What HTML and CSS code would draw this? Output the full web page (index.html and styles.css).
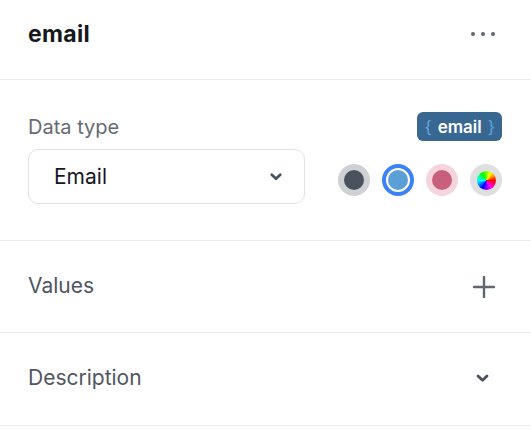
FILE: index.html
```html
<!DOCTYPE html>
<html>
<head>
<meta charset="utf-8">
<link rel="stylesheet" href="styles.css">
</head>
<body>
<div class="panel">
  <div class="header">
    <div class="title">email</div>
    <div class="more"><span></span><span></span><span></span></div>
  </div>
  <div class="section datatype">
    <div class="label-row">
      <div class="label">Data type</div>
      <div class="badge"><span class="brace">{</span><span>email</span><span class="brace">}</span></div>
    </div>
    <div class="control-row">
      <div class="select">
        <span class="select-text">Email</span>
        <svg class="chev" width="12" height="8" viewBox="0 0 12 8"><path d="M1.8 1.8 L6 5.8 L10.2 1.8" fill="none" stroke="#4b5360" stroke-width="2.8" stroke-linecap="round" stroke-linejoin="round"/></svg>
      </div>
      <div class="swatches">
        <div class="swatch s-gray"><i></i></div>
        <div class="swatch s-blue"><i></i></div>
        <div class="swatch s-pink"><i></i></div>
        <div class="swatch s-rainbow"><i></i></div>
      </div>
    </div>
  </div>
  <div class="section row">
    <div class="row-title">Values</div>
    <svg class="plus" width="22" height="22" viewBox="0 0 22 22"><path d="M11 1 V21 M1 11 H21" stroke="#5f6670" stroke-width="2.4" stroke-linecap="round"/></svg>
  </div>
  <div class="section row last">
    <div class="row-title">Description</div>
    <svg class="chev2" width="13" height="9" viewBox="0 0 13 9"><path d="M2 2 L6.5 6.3 L11 2" fill="none" stroke="#4b5360" stroke-width="2.8" stroke-linecap="round" stroke-linejoin="round"/></svg>
  </div>
</div>
</body>
</html>
```

FILE: styles.css
```css
html, body {
  margin: 0;
  padding: 0;
  background: #ffffff;
}
body {
  font-family: Inter, "Noto Sans", sans-serif;
}
.panel {
  width: 531px;
}
.header {
  height: 80px;
  box-sizing: border-box;
  padding: 20px 29px 0 28px;
  display: flex;
  justify-content: space-between;
  align-items: flex-start;
  border-bottom: 1px solid #efefef;
}
.title {
  font-size: 23px;
  font-weight: 700;
  line-height: 28px;
  color: #16181c;
  letter-spacing: 0.3px;
}
.more {
  display: flex;
  gap: 6px;
  height: 28px;
  align-items: center;
  padding-right: 7px;
}
.more span {
  width: 4px;
  height: 4px;
  border-radius: 50%;
  background: #5f6670;
}
.section {
  border-bottom: 1px solid #efefef;
  box-sizing: border-box;
}
.datatype {
  height: 161px;
  padding: 32px 29px 0 28px;
}
.label-row {
  display: flex;
  justify-content: space-between;
  align-items: center;
  height: 29px;
}
.label {
  font-size: 20px;
  color: #656b73;
}
.badge {
  background: #386792;
  color: #ffffff;
  border-radius: 6px;
  height: 29px;
  box-sizing: border-box;
  padding: 0 7px;
  display: flex;
  align-items: center;
  gap: 6px;
  font-size: 17px;
  font-weight: 600;
}
.badge .brace {
  color: #5fa6e0;
  font-weight: 400;
}
.control-row {
  margin-top: 8px;
  display: flex;
  align-items: flex-start;
  gap: 33px;
}
.select {
  width: 277px;
  height: 55px;
  box-sizing: border-box;
  border: 1px solid #e2e2e2;
  border-radius: 10px;
  display: flex;
  align-items: center;
  justify-content: space-between;
  padding: 0 22px 0 25px;
}
.select-text {
  font-size: 21px;
  color: #16181c;
}
.chev {
  margin-top: 1px;
}
.swatches {
  display: flex;
  gap: 12px;
  margin-top: 15px;
}
.swatch {
  width: 32px;
  height: 32px;
  border-radius: 50%;
  box-sizing: border-box;
  display: flex;
  align-items: center;
  justify-content: center;
}
.swatch i {
  display: block;
  width: 20px;
  height: 20px;
  border-radius: 50%;
}
.s-gray { background: #cfd1d4; }
.s-gray i { background: #4a525e; }
.s-blue { background: #ffffff; border: 4px solid #3b82f6; }
.s-blue i { background: #5a9fd6; }
.s-pink { background: #f4d5de; }
.s-pink i { background: #c9607b; }
.s-rainbow { background: #dedfe1; }
.s-rainbow i {
  width: 19px;
  height: 19px;
  background: conic-gradient(from 90deg, #ff0000, #ff00ff, #0000ff, #00ffff, #00ff00, #ffff00, #ff0000);
}
.row {
  height: 92px;
  padding: 0 37px 0 28px;
  display: flex;
  align-items: center;
  justify-content: space-between;
}
.row.last {
  height: 93px;
}
.row-title {
  font-size: 21px;
  color: #4f5661;
  margin-top: -3px;
}
.plus {
  margin-right: -1px;
  margin-top: 1px;
}
.chev2 {
  margin-right: 5px;
  margin-top: -2px;
}
```
